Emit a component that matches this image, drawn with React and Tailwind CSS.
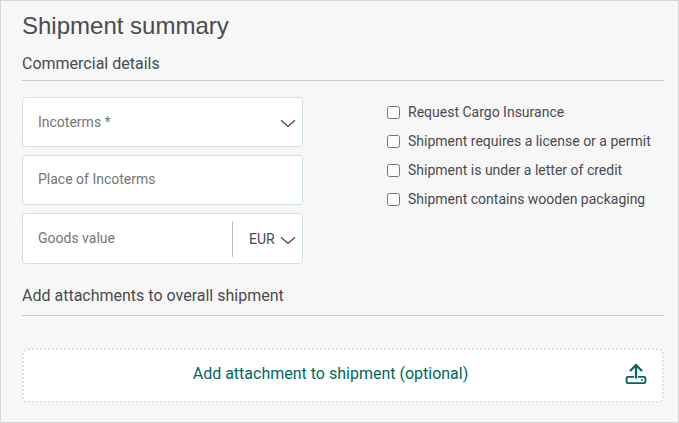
import React, { useState } from 'react';

const CHECKS = [
  { id: 'insurance', label: 'Request Cargo Insurance' },
  { id: 'license', label: 'Shipment requires a license or a permit' },
  { id: 'credit', label: 'Shipment is under a letter of credit' },
  { id: 'wooden', label: 'Shipment contains wooden packaging' },
];

function ChevronIcon({ className }) {
  return (
    <svg viewBox="0 0 16 9" className={className} fill="none" stroke="currentColor" strokeWidth="1.3" aria-hidden="true">
      <path d="M1 1.2l7 6.3 7-6.3" />
    </svg>
  );
}

function UploadIcon({ className }) {
  return (
    <svg viewBox="0 0 22 22" className={className} fill="none" stroke="currentColor" strokeWidth="2.2" aria-hidden="true">
      <path d="M11 15.5V2.5" />
      <path d="M5 8l6-6 6 6" />
      <path d="M9 13.9H3.2Q1.6 13.9 1.6 15.4v3.2q0 1.5 1.6 1.5h15.6q1.6 0 1.6-1.5v-3.2q0-1.5-1.6-1.5H13" strokeWidth="1.9" />
      <circle cx="17" cy="17" r="1" fill="currentColor" stroke="none" />
    </svg>
  );
}

function SectionTitle({ className, children }) {
  return (
    <h2 className={`border-b border-[#c8c8c8] text-base leading-6 text-[#4a4a4f] ${className}`}>
      {children}
    </h2>
  );
}

export default function App() {
  const [checked, setChecked] = useState({});

  const toggle = (id) => setChecked((prev) => ({ ...prev, [id]: !prev[id] }));

  return (
    <main className="min-h-screen border border-[#d6d6d6] bg-[#f7f7f7] pt-[7px] pr-3.5 pb-4 pl-[21px] font-[Roboto,'Noto_Sans',sans-serif] text-[#4a4a4f]">
      <h1 className="font-['Liberation_Sans',Arial,sans-serif] text-2xl leading-9">Shipment summary</h1>

      <section className="mt-2">
        <SectionTitle className="pb-1">Commercial details</SectionTitle>

        <div className="mt-4 flex items-start">
          <div className="flex w-[281px] shrink-0 flex-col gap-2">
            <div className="relative">
              <select
                aria-label="Incoterms"
                defaultValue=""
                className="h-[50px] w-full appearance-none rounded border border-[#d0e0e7] bg-white px-[15px] text-sm text-[#757575]"
              >
                <option value="">Incoterms *</option>
                <option value="EXW">EXW</option>
                <option value="FOB">FOB</option>
                <option value="CIF">CIF</option>
              </select>
              <ChevronIcon className="pointer-events-none absolute top-[22px] right-[7px] h-[9px] w-4 text-[#4a4a4f]" />
            </div>

            <input
              type="text"
              aria-label="Place of Incoterms"
              placeholder="Place of Incoterms"
              className="h-[50px] w-full rounded border border-[#d0e0e7] bg-white px-[15px] pb-0.5 text-sm placeholder:text-[#757575]"
            />

            <div className="flex h-[51px] items-center rounded border border-[#d0e0e7] bg-white">
              <input
                type="text"
                aria-label="Goods value"
                placeholder="Goods value"
                className="h-full min-w-0 flex-1 pb-0.5 pl-[15px] text-sm placeholder:text-[#757575]"
              />
              <div className="relative h-9 w-[70px] border-l border-[#bdbdbd]">
                <select
                  aria-label="Currency"
                  defaultValue="EUR"
                  className="h-full w-full appearance-none pl-4 text-sm"
                >
                  <option>EUR</option>
                  <option>USD</option>
                  <option>GBP</option>
                </select>
                <ChevronIcon className="pointer-events-none absolute top-[15px] right-1.5 h-[9px] w-4" />
              </div>
            </div>
          </div>

          <ul className="ml-[84px] flex flex-1 flex-col gap-2 pt-[5px]">
            {CHECKS.map(({ id, label }) => (
              <li key={id} className="flex items-center gap-2">
                <input
                  id={id}
                  type="checkbox"
                  checked={!!checked[id]}
                  onChange={() => toggle(id)}
                  className="size-[13px] shrink-0"
                />
                <label htmlFor={id} className="pb-px text-sm leading-5 whitespace-nowrap">{label}</label>
              </li>
            ))}
          </ul>
        </div>
      </section>

      <section className="mt-5">
        <SectionTitle className="pb-[7px]">Add attachments to overall shipment</SectionTitle>

        <button
          type="button"
          className="mt-8 flex h-[55px] w-full items-center rounded-md border-2 border-dotted border-[#d3e0e8] bg-white pr-[15px] pb-1 text-base text-[#00685e]"
        >
          <span className="flex-1 pl-3 text-center">Add attachment to shipment (optional)</span>
          <UploadIcon className="size-[22px]" />
        </button>
      </section>
    </main>
  );
}
